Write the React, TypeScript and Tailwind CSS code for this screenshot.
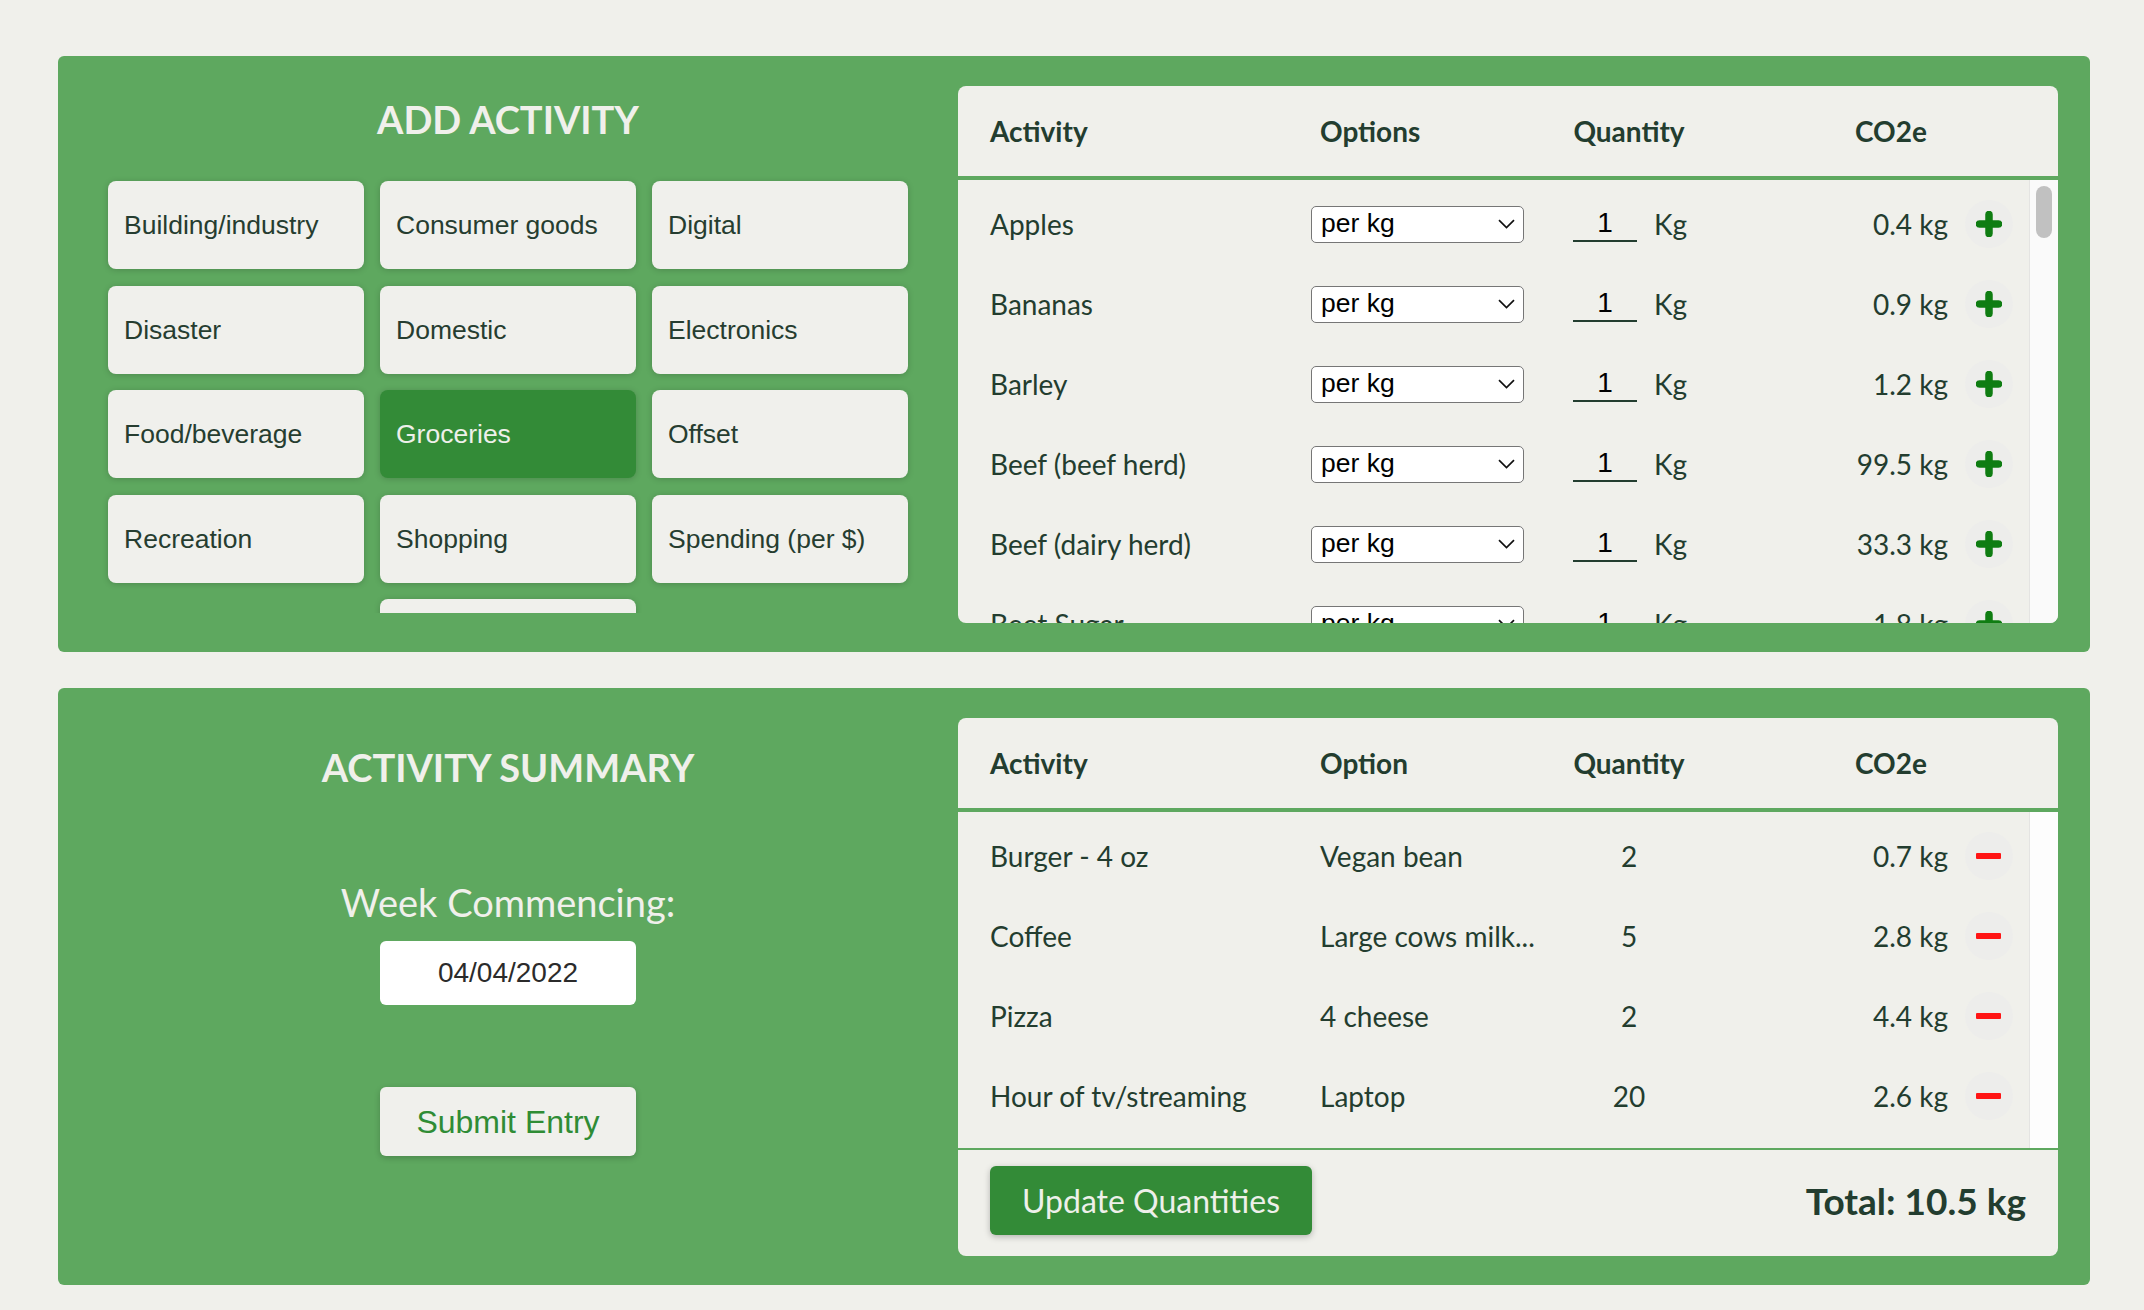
import React from 'react'

const categories = [
  'Building/industry',
  'Consumer goods',
  'Digital',
  'Disaster',
  'Domestic',
  'Electronics',
  'Food/beverage',
  'Groceries',
  'Offset',
  'Recreation',
  'Shopping',
  'Spending (per $)',
  'Transport',
]

const groceries = [
  { name: 'Apples', co2: '0.4' },
  { name: 'Bananas', co2: '0.9' },
  { name: 'Barley', co2: '1.2' },
  { name: 'Beef (beef herd)', co2: '99.5' },
  { name: 'Beef (dairy herd)', co2: '33.3' },
  { name: 'Beet Sugar', co2: '1.8' },
]

const summary = [
  { name: 'Burger - 4 oz', option: 'Vegan bean', qty: '2', co2: '0.7' },
  { name: 'Coffee', option: 'Large cows milk...', qty: '5', co2: '2.8' },
  { name: 'Pizza', option: '4 cheese', qty: '2', co2: '4.4' },
  { name: 'Hour of tv/streaming', option: 'Laptop', qty: '20', co2: '2.6' },
]

const rowCols = 'grid grid-cols-[321px_234px_168px_235px_81px] items-center'

function PlusIcon() {
  return (
    <svg width="26" height="26" viewBox="0 0 26 26">
      <path d="M13 3.5 V22.5 M3.5 13 H22.5" stroke="#0f7d12" strokeWidth="7.5" strokeLinecap="round" fill="none" />
    </svg>
  )
}

function SelectBox() {
  return (
    <div className="w-[213px] h-[37px] bg-white border-[1.5px] border-[#767676] rounded-[5px] flex items-center justify-between pl-[9px] pr-[8px] font-['Liberation_Sans',Arial,sans-serif] text-[26.5px] text-black">
      <span>per kg</span>
      <svg width="17" height="10" viewBox="0 0 17 10">
        <path d="M1 1.2 L8.5 8.5 L16 1.2" stroke="#111" strokeWidth="1.7" fill="none" />
      </svg>
    </div>
  )
}

function TableHeader({ second }: { second: string }) {
  return (
    <div className="h-[90px] shrink-0 border-b-4 border-[#5ea85f] pl-[32px] box-content">
      <div className={`${rowCols} h-[90px] font-bold text-[28px] text-[#233d2f]`}>
        <span>Activity</span>
        <span className="pl-[9px]">{second}</span>
        <span className="text-center">Quantity</span>
        <span className="pl-[142px]">CO2e</span>
        <span />
      </div>
    </div>
  )
}

export default function App() {
  return (
    <div className="min-h-screen bg-[#f0f0eb] pt-[56px] pb-[25px] font-['Lato',sans-serif]">
      {/* Add activity panel */}
      <section className="ml-[58px] w-[2032px] h-[596px] rounded-[6px] bg-[#5ea85f] flex pt-[30px] pb-[29px] pr-[32px]">
        <div className="w-[900px] flex flex-col items-center">
          <h2 className="mt-[9px] text-[38px] leading-[48px] font-bold text-[#f0f0eb]">ADD ACTIVITY</h2>
          <div className="mt-[32px] w-[812px] h-[438px] overflow-hidden px-[6px] pt-[6px]">
            <div className="flex flex-wrap justify-center content-start gap-x-[16px] gap-y-[16.5px]">
              {categories.map((c) => {
                const active = c === 'Groceries'
                return (
                  <button
                    key={c}
                    className={`w-[256px] h-[88px] rounded-[8px] text-left pl-[16px] pt-[2px] font-['Liberation_Sans',Arial,sans-serif] text-[26.5px] shadow-[0_1px_6px_rgba(0,0,0,0.18)] ${
                      active ? 'bg-[#338b37] text-[#eef0ea]' : 'bg-[#f0f0ec] text-[#263d30]'
                    }`}
                  >
                    {c}
                  </button>
                )
              })}
            </div>
          </div>
        </div>

        <div className="flex-1 bg-[#f0f0eb] rounded-[8px] overflow-hidden flex flex-col">
          <TableHeader second="Options" />
          <div className="flex-1 flex min-h-0">
            <div className="flex-1 overflow-hidden pt-[4px] pl-[32px] text-[28px] text-[#233d2f]">
              {groceries.map((g) => (
                <div key={g.name} className={`${rowCols} h-[80px]`}>
                  <span>{g.name}</span>
                  <SelectBox />
                  <div className="flex items-center justify-center gap-[17px]">
                    <div className="w-[64px] h-[36px] border-b-2 border-[#233d2f] flex items-center justify-center font-['Liberation_Sans',Arial,sans-serif] text-[28px] leading-[30px] text-black">
                      1
                    </div>
                    <span className="w-[31px]">Kg</span>
                  </div>
                  <span className="text-right">{g.co2} kg</span>
                  <div className="flex justify-center">
                    <div className="w-[48px] h-[48px] rounded-full bg-[#ededeb] flex items-center justify-center">
                      <PlusIcon />
                    </div>
                  </div>
                </div>
              ))}
            </div>
            <div className="w-[29px] shrink-0 bg-[#fafafa] border-l border-[#e4e4e2] pl-[6px] pt-[6px]">
              <div className="w-[16px] h-[52px] rounded-full bg-[#c1c1c1]" />
            </div>
          </div>
        </div>
      </section>

      {/* Activity summary panel */}
      <section className="mt-[36px] ml-[58px] w-[2032px] h-[597px] rounded-[6px] bg-[#5ea85f] flex pt-[30px] pb-[29px] pr-[32px]">
        <div className="w-[900px] flex flex-col items-center">
          <h2 className="mt-[25px] text-[38px] leading-[48px] font-bold text-[#f0f0eb]">ACTIVITY SUMMARY</h2>
          <p className="mt-[87px] text-[38px] leading-[48px] text-[#f0f0eb]">Week Commencing:</p>
          <div className="mt-[15px] w-[256px] h-[64px] rounded-[6px] bg-white flex items-center justify-center font-['Liberation_Sans',Arial,sans-serif] text-[28px] text-[#2b2b2b]">
            04/04/2022
          </div>
          <button className="mt-[82px] w-[256px] h-[69px] rounded-[6px] bg-[#f0f0ec] shadow-[0_2px_6px_rgba(0,0,0,0.2)] font-['Liberation_Sans',Arial,sans-serif] text-[32px] text-[#2f8c35]">
            Submit Entry
          </button>
        </div>

        <div className="flex-1 bg-[#f0f0eb] rounded-[8px] overflow-hidden flex flex-col">
          <TableHeader second="Option" />
          <div className="h-[336px] shrink-0 flex">
            <div className="flex-1 pt-[4px] pl-[32px] text-[28px] text-[#233d2f]">
              {summary.map((s) => (
                <div key={s.name} className={`${rowCols} h-[80px]`}>
                  <span>{s.name}</span>
                  <span className="pl-[9px]">{s.option}</span>
                  <span className="text-center">{s.qty}</span>
                  <span className="text-right">{s.co2} kg</span>
                  <div className="flex justify-center">
                    <div className="w-[48px] h-[48px] rounded-full bg-[#ededeb] flex items-center justify-center">
                      <div className="w-[25px] h-[6px] rounded-[1px] bg-[#ff1414]" />
                    </div>
                  </div>
                </div>
              ))}
            </div>
            <div className="w-[29px] shrink-0 bg-[#fdfdfd] border-l border-[#e4e4e2]" />
          </div>
          <div className="flex-1 border-t-2 border-[#5ea85f] flex items-center justify-between pl-[32px] pr-[32px] pt-[16px] pb-[21px]">
            <button className="h-[69px] px-[32px] rounded-[6px] bg-[#338b37] shadow-[0_2px_6px_rgba(0,0,0,0.25)] text-[32px] text-[#eef0ea]">
              Update Quantities
            </button>
            <span className="text-[37px] font-bold text-[#233d2f]">Total: 10.5 kg</span>
          </div>
        </div>
      </section>
    </div>
  )
}
